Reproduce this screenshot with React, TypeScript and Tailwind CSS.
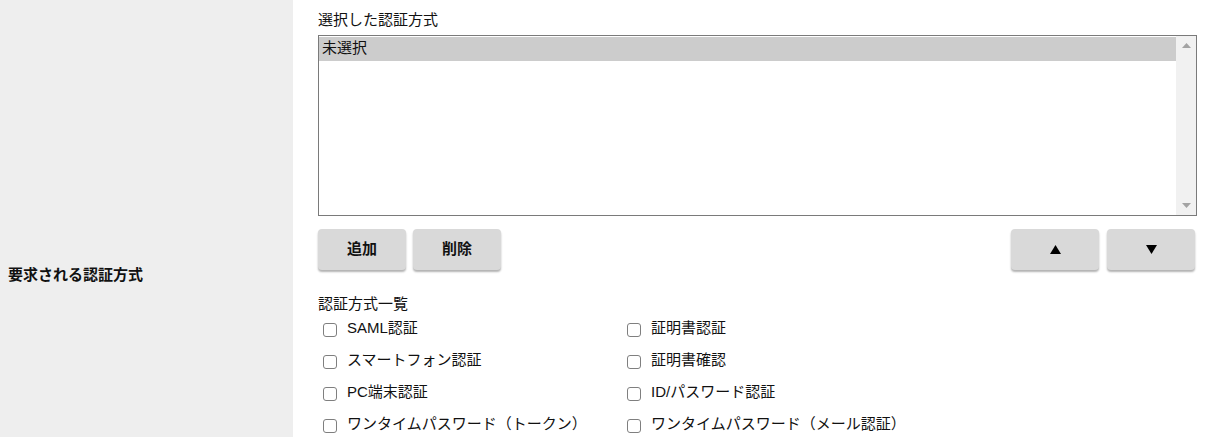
import React from 'react';

const FONT = '"Liberation Sans", "Noto Sans CJK JP", sans-serif';

const METHODS: [string, string][] = [
  ['SAML認証', '証明書認証'],
  ['スマートフォン認証', '証明書確認'],
  ['PC端末認証', 'ID/パスワード認証'],
  ['ワンタイムパスワード（トークン）', 'ワンタイムパスワード（メール認証）'],
];

function Checkbox({ label }: { label: string }) {
  return (
    <label className="flex h-[32px] items-start">
      <span className="ml-[5px] mt-[9px] box-border h-[14px] w-[14px] rounded-[3px] border border-[#7f7f7f] bg-white" />
      <span className="ml-[10px] leading-[28px]">{label}</span>
    </label>
  );
}

function GrayButton({ children }: { children: React.ReactNode }) {
  return (
    <button className="flex h-[41px] w-[88px] items-center justify-center rounded-[4px] bg-[#d9d9d9] text-[15px] font-bold shadow-[0_2px_2px_rgba(0,0,0,0.3)]">
      {children}
    </button>
  );
}

export default function App() {
  return (
    <div className="flex min-h-[550px] bg-white text-[15px] text-[#111]" style={{ fontFamily: FONT }}>
      {/* Row header */}
      <div className="flex w-[293px] shrink-0 items-center bg-[#eeeeee] pl-[8px]">
        <span className="font-bold">要求される認証方式</span>
      </div>

      {/* Content */}
      <div className="flex-1 pl-[25px] pr-[8px] pt-[10px]">
        <div className="mb-[5px] leading-[20px]">選択した認証方式</div>

        <div className="flex h-[181px] border border-[#7a7a7a] bg-white">
          <div className="flex-1 pt-px">
            <div className="h-[24px] bg-[#cccccc] px-[3px] leading-[22px]">未選択</div>
          </div>
          <div className="flex w-[20px] flex-col items-center justify-between bg-[#f1f1f1] py-[7px]">
            <svg width="9" height="5" viewBox="0 0 9 5">
              <path d="M0 5 L4.5 0 L9 5 Z" fill="#a3a3a3" />
            </svg>
            <svg width="9" height="5" viewBox="0 0 9 5">
              <path d="M0 0 L4.5 5 L9 0 Z" fill="#a3a3a3" />
            </svg>
          </div>
        </div>

        <div className="mt-[13px] flex items-center pr-[2px]">
          <div className="flex gap-[7px]">
            <GrayButton>追加</GrayButton>
            <GrayButton>削除</GrayButton>
          </div>
          <div className="ml-auto flex gap-[8px]">
            <GrayButton>
              <svg width="11" height="9" viewBox="0 0 11 9">
                <path d="M0 9 L5.5 0 L11 9 Z" fill="#000" />
              </svg>
            </GrayButton>
            <GrayButton>
              <svg width="11" height="9" viewBox="0 0 11 9">
                <path d="M0 0 L5.5 9 L11 0 Z" fill="#000" />
              </svg>
            </GrayButton>
          </div>
        </div>

        <div className="mt-[24px] leading-[20px]">認証方式一覧</div>
        <div className="grid w-[608px] grid-cols-2">
          {METHODS.map(([a, b]) => (
            <React.Fragment key={a}>
              <Checkbox label={a} />
              <Checkbox label={b} />
            </React.Fragment>
          ))}
        </div>
      </div>
    </div>
  );
}
